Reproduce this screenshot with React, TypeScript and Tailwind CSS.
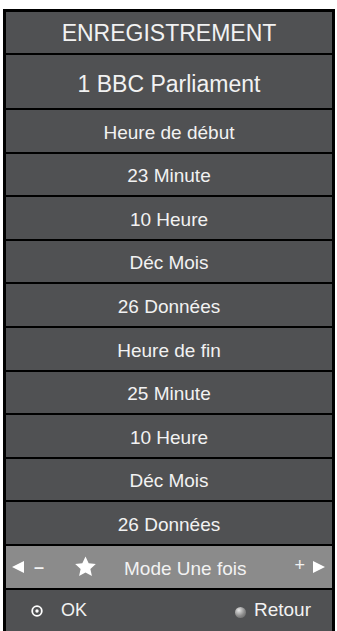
const rows = [
  'Heure de début',
  '23 Minute',
  '10 Heure',
  'Déc Mois',
  '26 Données',
  'Heure de fin',
  '25 Minute',
  '10 Heure',
  'Déc Mois',
  '26 Données',
];

function Star() {
  return (
    <svg width="23" height="22" viewBox="0 0 24 23" className="shrink-0">
      <polygon
        fill="#ffffff"
        points="12,0.6 15.3,7.6 22.8,8.4 17.1,13.6 18.7,21 12,17.3 5.3,21 6.9,13.6 1.2,8.4 8.7,7.6"
      />
    </svg>
  );
}

function Triangle({ dir }: { dir: 'left' | 'right' }) {
  return (
    <svg width="12" height="12" viewBox="0 0 12 12" className="shrink-0">
      <polygon fill="#ffffff" points={dir === 'left' ? '12,0 12,12 0,6' : '0,0 0,12 12,6'} />
    </svg>
  );
}

export default function App() {
  return (
    <div className="h-[631px] overflow-hidden bg-white pt-[9px] pl-[3px] pr-[2px] font-['Liberation_Sans',Arial,sans-serif] text-[#f2f2f2]">
      <div className="flex h-full flex-col gap-[2px] border-[3px] border-b-0 border-black bg-black">
        <div className="flex h-[41px] shrink-0 items-center justify-center bg-[#505153] pt-[2px] text-[23px]">
          ENREGISTREMENT
        </div>
        <div className="flex h-[53px] shrink-0 items-center justify-center bg-[#505153] pt-[5px] text-[23px]">
          1 BBC Parliament
        </div>
        {rows.map((label, i) => (
          <div
            key={i}
            className="flex h-[41.6px] shrink-0 items-center justify-center bg-[#505153] pt-[4px] text-[19px]"
          >
            {label}
          </div>
        ))}

        {/* mode selector */}
        <div className="flex h-[42px] shrink-0 items-center bg-[#8b8b8b] pl-[6px] pr-[7px]">
          <Triangle dir="left" />
          <span className="ml-[10px] text-[18px] font-bold leading-none">–</span>
          <div className="ml-[30px]">
            <Star />
          </div>
          <span className="ml-[27px] mt-[4px] text-[19px]">Mode Une fois</span>
          <div className="flex-1" />
          <span className="mb-[3px] text-[18px] leading-none">+</span>
          <div className="ml-[8px]">
            <Triangle dir="right" />
          </div>
        </div>

        {/* footer */}
        <div className="flex flex-1 items-center bg-[#505153] pl-[25px] pr-[21px]">
          <svg width="12" height="12" viewBox="0 0 12 12" className="mt-[2px] shrink-0">
            <circle cx="6" cy="6" r="4.8" fill="none" stroke="#ffffff" strokeWidth="1.8" />
            <circle cx="6" cy="6" r="1.7" fill="#ffffff" />
          </svg>
          <span className="ml-[18px] text-[18px]">OK</span>
          <div className="flex-1" />
          <div className="mt-[4px] h-[11px] w-[11px] rounded-full bg-[radial-gradient(circle_at_35%_30%,#e6e6e6,#8a8a8a_55%,#5a5a5a)]" />
          <span className="ml-[8px] text-[19px]">Retour</span>
        </div>
      </div>
    </div>
  );
}
